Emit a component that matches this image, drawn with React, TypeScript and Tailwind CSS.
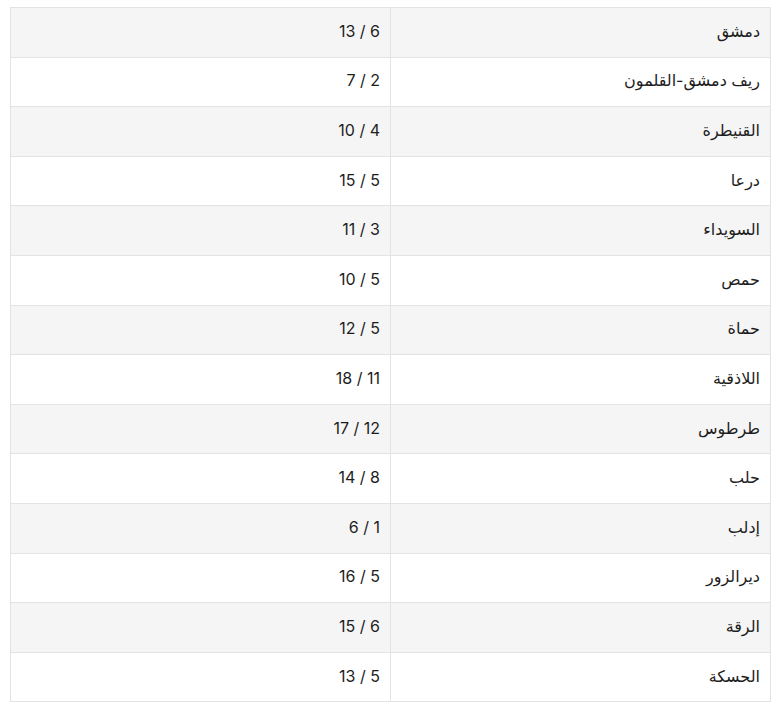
import React from "react";

const rows: [string, string][] = [
  ["دمشق", "13 / 6"],
  ["ريف دمشق-القلمون", "7 / 2"],
  ["القنيطرة", "10 / 4"],
  ["درعا", "15 / 5"],
  ["السويداء", "11 / 3"],
  ["حمص", "10 / 5"],
  ["حماة", "12 / 5"],
  ["اللاذقية", "18 / 11"],
  ["طرطوس", "17 / 12"],
  ["حلب", "14 / 8"],
  ["إدلب", "6 / 1"],
  ["ديرالزور", "16 / 5"],
  ["الرقة", "15 / 6"],
  ["الحسكة", "13 / 5"],
];

export default function App() {
  return (
    <div className="bg-white w-[783px] h-[707px] pt-[7px] pl-[10px]" style={{ fontFamily: 'Inter, "DejaVu Sans", sans-serif' }}>
      <table dir="rtl" className="w-[761px] border-collapse table-fixed text-[16px] text-[#1d1d1d]">
        <tbody>
          {rows.map(([name, val], i) => (
            <tr key={i} className={i % 2 === 0 ? "bg-[#f5f5f5]" : "bg-white"}>
              <td className="h-[49.6px] border border-[#e3e3e3] px-[10px] pt-0 pb-[3px] text-right align-middle w-1/2">{name}</td>
              <td className="h-[49.6px] border border-[#e3e3e3] px-[10px] pt-0 pb-[3px] text-right align-middle w-1/2">
                <span dir="ltr" className="inline-block">{val}</span>
              </td>
            </tr>
          ))}
        </tbody>
      </table>
    </div>
  );
}
